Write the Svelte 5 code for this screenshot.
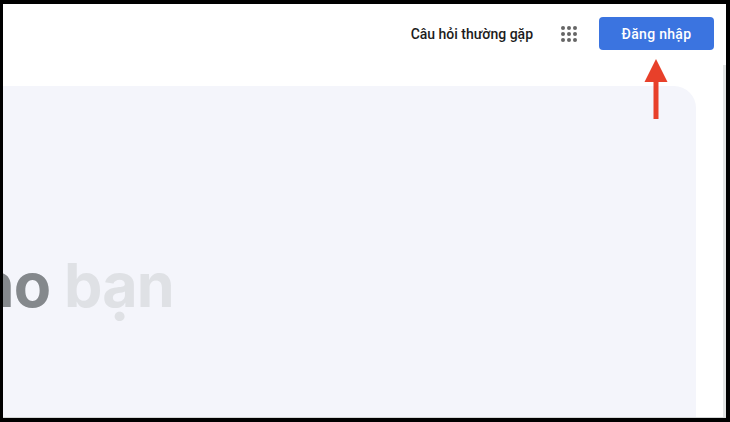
<script lang="ts">
	const dots = Array.from({ length: 9 });
</script>

<div class="frame">
	<div class="page">
		<header class="topbar">
			<a class="faq" href="#faq">Câu hỏi thường gặp</a>
			<button type="button" class="apps" aria-label="Ứng dụng">
				{#each dots as _}
					<span class="dot"></span>
				{/each}
			</button>
			<button type="button" class="login">Đăng nhập</button>
		</header>

		<main class="content">
			<section class="hero">
				<h1><span class="dim">cho</span> <span class="faint">bạn</span></h1>
			</section>
		</main>

		<div class="scrollbar"></div>

		<svg class="arrow" width="26" height="62" viewBox="0 0 26 62" aria-hidden="true">
			<path d="M13 0 L24.500 23 L1.500 23 Z" fill="#e8402a" />
			<rect x="10.500" y="22" width="5" height="38" fill="#e8402a" />
		</svg>
	</div>
</div>

<style>
	:global(body) {
		margin: 0;
		background: #000;
	}

	.frame {
		box-sizing: border-box;
		width: 730px;
		height: 422px;
		padding: 4px 4px 4px 3px;
		background: #000;
		font-family: Roboto, 'Liberation Sans', sans-serif;
	}

	.page {
		position: relative;
		display: flex;
		flex-direction: column;
		height: 100%;
		overflow: hidden;
		background: #fff;
		border-bottom: 1px solid #d4d6d6;
		box-sizing: border-box;
	}

	.topbar {
		display: flex;
		align-items: center;
		justify-content: flex-end;
		height: 82px;
		padding: 0 12px 23px 0;
		box-sizing: border-box;
		flex: none;
	}

	.faq {
		margin-right: 28px;
		color: #1c1c1c;
		font-size: 14px;
		font-weight: 500;
		text-decoration: none;
	}

	.apps {
		display: grid;
		grid-template-columns: repeat(3, 4px);
		gap: 2px;
		margin-right: 22px;
		padding: 0;
		border: 0;
		background: none;
	}

	.dot {
		width: 4px;
		height: 4px;
		border-radius: 50%;
		background: #666;
	}

	.login {
		width: 115px;
		height: 33px;
		padding: 0;
		border: 0;
		border-radius: 4px;
		background: #3b74e0;
		color: #fff;
		font-family: inherit;
		font-size: 14px;
		font-weight: 500;
		letter-spacing: 0.3px;
	}

	.content {
		flex: 1;
		display: flex;
		margin-left: -120px;
		padding-right: 30px;
		min-height: 0;
	}

	.hero {
		flex: 1;
		display: flex;
		justify-content: flex-end;
		padding: 159px 522px 0 0;
		background: #f4f5fb;
		border-radius: 22px 22px 0 0;
	}

	h1 {
		margin: 0;
		font-family: Inter, sans-serif;
		font-size: 61px;
		font-weight: 700;
		line-height: 80px;
		letter-spacing: -0.8px;
		white-space: nowrap;
	}

	.dim {
		color: #84888c;
	}

	.faint {
		color: #dfe1e5;
	}

	.scrollbar {
		position: absolute;
		top: 61px;
		right: 0;
		bottom: 0;
		width: 3px;
		background: #e2e4e4;
	}

	.arrow {
		position: absolute;
		top: 55px;
		left: 640px;
	}
</style>
